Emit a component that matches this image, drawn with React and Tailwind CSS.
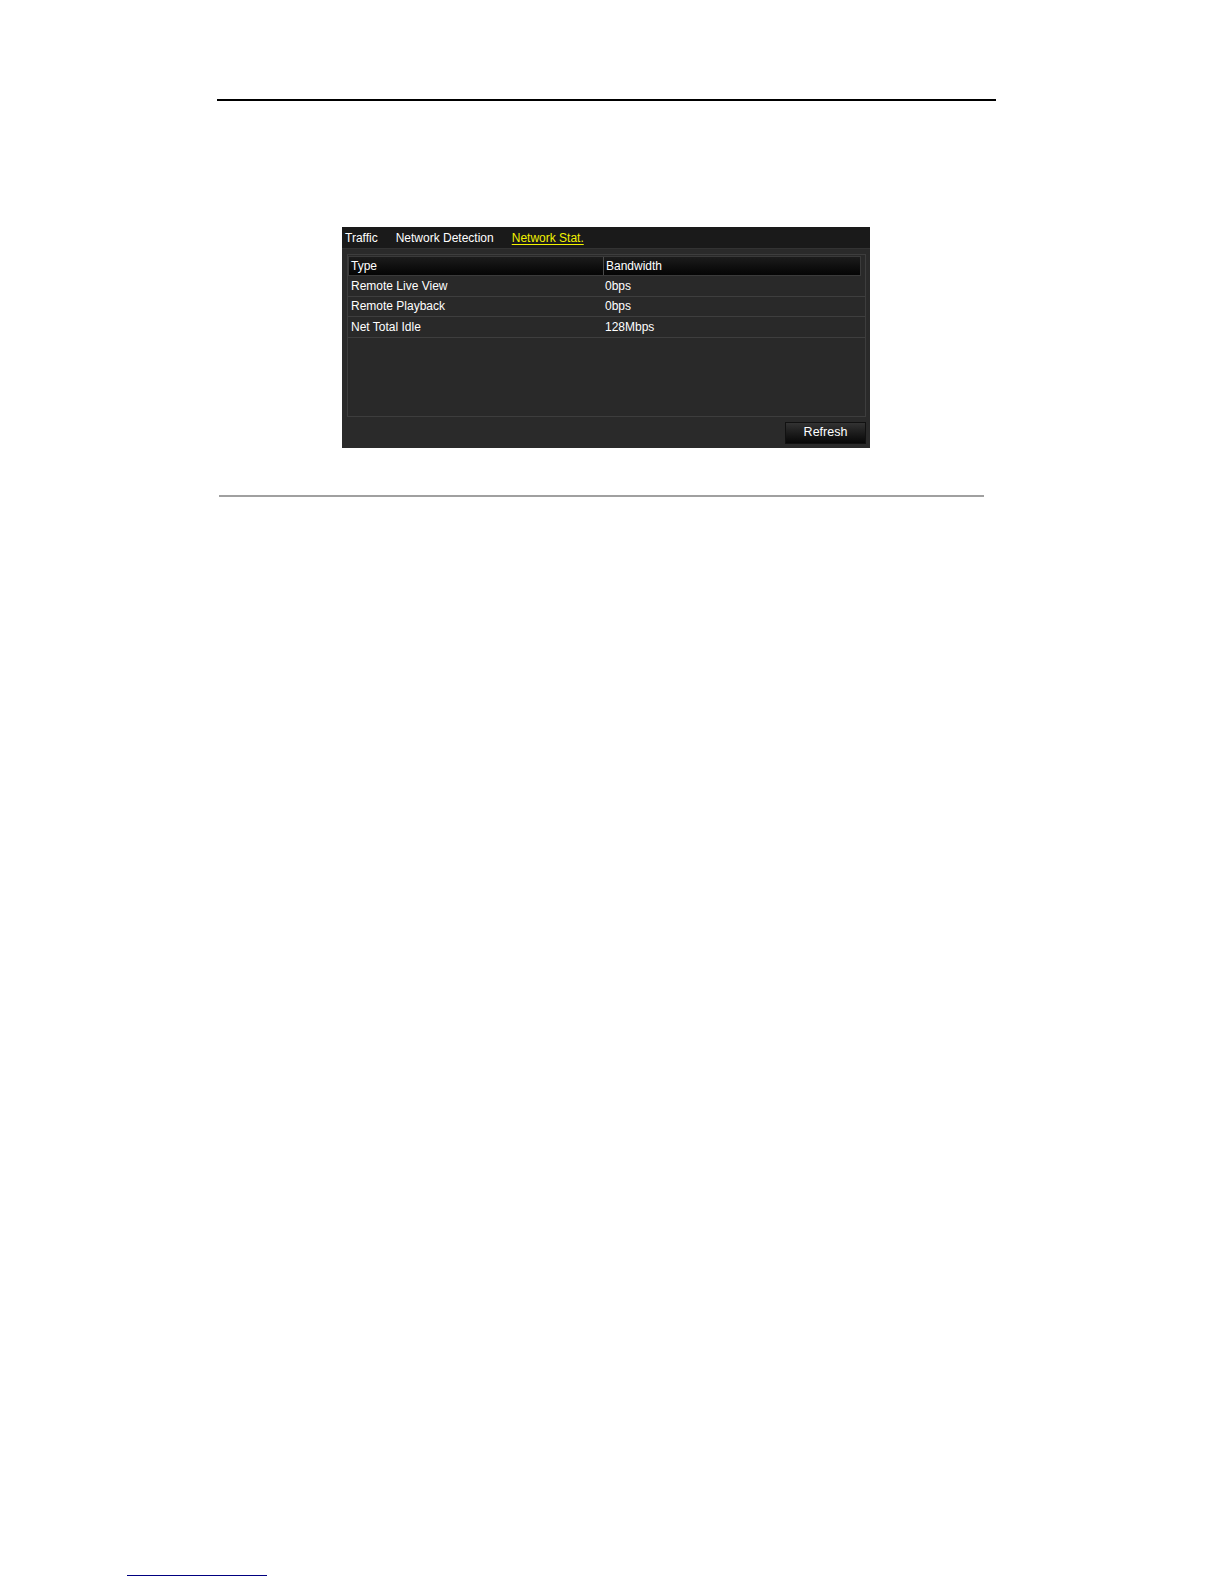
export default function App() {
	const rows = [
		["Remote Live View", "0bps"],
		["Remote Playback", "0bps"],
		["Net Total Idle", "128Mbps"],
	];

	return (
		<div className="w-full h-screen overflow-hidden bg-white flex flex-col font-['Liberation_Sans',Arial,sans-serif]">
			<div className="mt-[99px] ml-[217px] w-[779px] h-[2px] bg-black shrink-0" />

			<div className="mt-[126px] ml-[342px] w-[528px] h-[221px] shrink-0 flex flex-col bg-[#2a2a2a] text-white text-[12px]">
				<div className="h-[22px] flex items-center gap-[18px] pl-[3px] bg-[#1a1a1a] border-b border-[#333]">
					<span>Traffic</span>
					<span>Network Detection</span>
					<span className="text-[#f2f200] underline underline-offset-[2px]">Network Stat.</span>
				</div>

				<div className="mt-[5px] ml-[5px] mr-[4px] h-[163px] border border-[#3d3d3d] bg-[#292929] flex flex-col pt-[1px] pr-[4px]">
					<div className="h-[20px] flex bg-gradient-to-b from-[#1c1c1c] to-[#050505] border border-[#3a3a3a]">
						<div className="w-[255px] pl-[2px] flex items-center border-r border-[#4a4a4a]">Type</div>
						<div className="flex-1 pl-[2px] flex items-center">Bandwidth</div>
					</div>
					{rows.map(([name, value]) => (
						<div key={name} className="h-[20.5px] flex items-center border-b border-[#3e3e3e] mr-[-4px]">
							<div className="w-[257px] pl-[3px]">{name}</div>
							<div className="flex-1">{value}</div>
						</div>
					))}
				</div>

				<div className="flex-1 flex items-center justify-end pr-[4px]">
					<div className="w-[81px] h-[22px] flex items-center justify-center text-[12.5px] bg-gradient-to-b from-[#333] to-[#080808] border border-[#111]">
						Refresh
					</div>
				</div>
			</div>

			<div className="mt-[47px] ml-[219px] w-[765px] h-[2px] bg-[#a0a0a0] shrink-0" />

			<div className="mt-auto mb-[8px] ml-[127px] w-[140px] h-px bg-[#000080] shrink-0" />
		</div>
	);
}
